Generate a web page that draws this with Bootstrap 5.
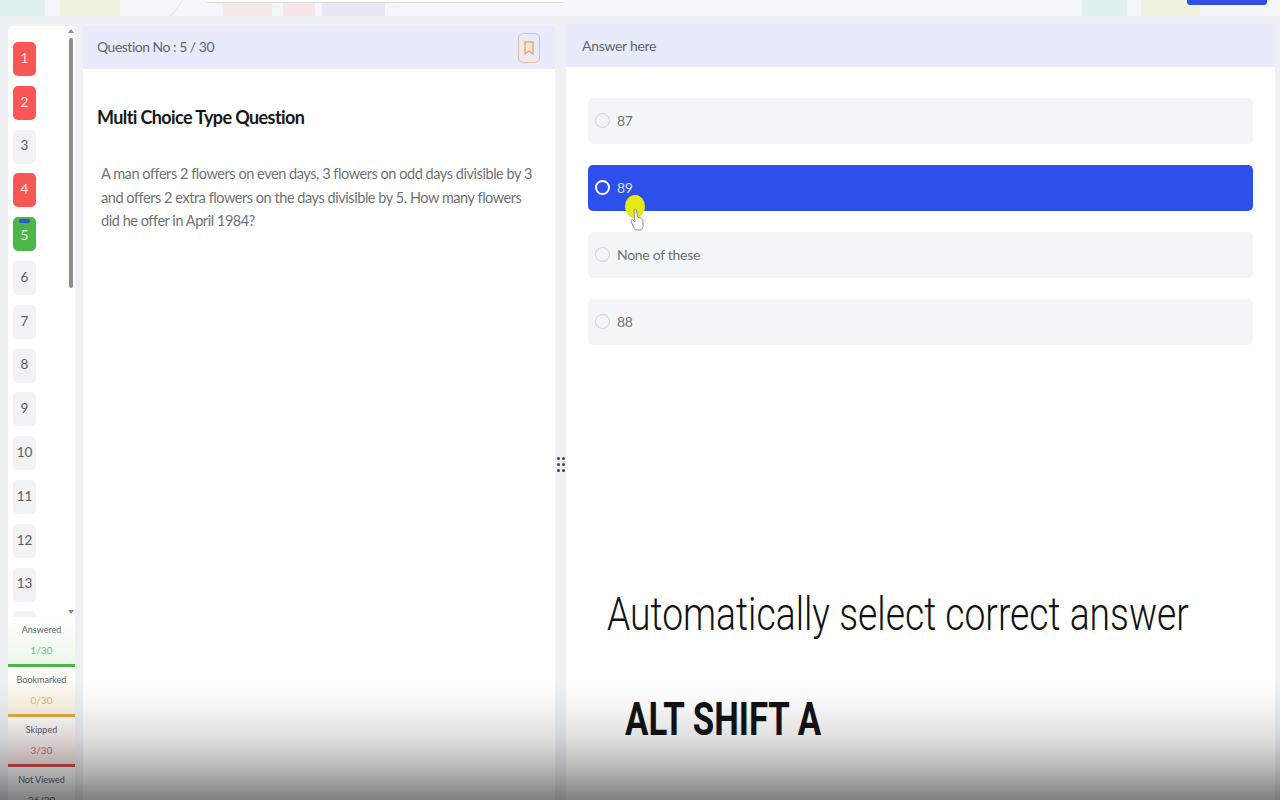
<!DOCTYPE html>
<html lang="en">
<head>
  <meta charset="UTF-8" />
  <meta name="viewport" content="width=device-width, initial-scale=1.0"/>
  <title>Assessment</title>
  <link href="https://cdn.jsdelivr.net/npm/bootstrap@5.3.3/dist/css/bootstrap.min.css" rel="stylesheet">
  <style>
    html, body { height: 800px; overflow: hidden; }
    body { background: #eef1f4; font-family: "Lato", "Liberation Sans", sans-serif; color: #6a6c70; position: relative; }

    /* strip of the page header, mostly cut off */
    .top-strip { height: 16px; background: #f4f6f9; overflow: hidden; }
    .strip-a { width: 45px; background: #e0f2ef; }
    .strip-b { width: 60px; margin-left: 15px; background: #eef2de; }
    .strip-c { width: 49px; margin-left: 103px; background: #f8e9e9; }
    .strip-d { width: 32px; margin-left: 11px; background: #f6e6ea; }
    .strip-e { width: 63px; margin-left: 7px; background: #e9e7f5; }
    .strip-f { width: 45px; margin-left: 697px; background: #e0f2ef; }
    .strip-g { width: 59px; margin-left: 14px; background: #eef2de; }
    .strip-search { position: absolute; left: 205px; top: 0; width: 360px; height: 3px; background: #fff; border-bottom: 1px solid #ddd; border-radius: 0 0 3px 3px; }
    .strip-btn { position: absolute; left: 1187px; top: 0; width: 80px; height: 5px; background: #2f4fe6; border-radius: 0 0 3px 3px; }
    .strip-slant { position: absolute; left: 168px; top: 0; }

    .exam-body { height: 784px; padding: 10px 0 0 8px; }

    .side-col { width: 67px; flex: none; }
    .q-scroll { height: 591px; flex: none; background: #fff; overflow: hidden; padding: 16px 0 0 5px; position: relative; border-radius: 4px 4px 0 0; }
    .q-num { width: 23px; height: 34px; border-radius: 5px; background: #f1f2f4; font-size: 13.5px; color: #5c5e62; margin-bottom: 9.8px; padding-bottom: 2px; position: relative; }
    .q-num.is-red { background: #f95656; color: #fde3e3; }
    .q-num.is-green { background: #4cb648; color: #e4f5e3; padding: 2px 0 0; }
    .q-num.is-green::before { content: ""; position: absolute; top: 2px; left: 6px; width: 11px; height: 4px; border-radius: 2px; background: #2f55d4; }
    .scroll-thumb { position: absolute; top: 12px; right: 2px; width: 4px; height: 250px; background: #8b8d90; border-radius: 2px; }
    .arrow-up, .arrow-down { position: absolute; right: 1px; width: 0; height: 0; border-left: 3px solid transparent; border-right: 3px solid transparent; }
    .arrow-up { top: 3px; border-bottom: 4px solid #8b8d90; }
    .arrow-down { bottom: 3px; border-top: 4px solid #8b8d90; }

    .stat-box { height: 50px; flex: none; text-align: center; font-size: 9px; padding-top: 3px; line-height: 20px; border-bottom: 3px solid; color: #5c5e62; }
    .stat-box span { display: block; font-size: 10px; }
    .stat-answered { background: linear-gradient(#fff, #ecf8ea); border-color: #4cb648; }
    .stat-answered span { color: #6cbd68; }
    .stat-bookmarked { background: linear-gradient(#fff, #fbf3e2); border-color: #e5ac45; }
    .stat-bookmarked span { color: #e8b45a; }
    .stat-skipped { background: linear-gradient(#fff, #f8e6e6); border-color: #d9524f; }
    .stat-skipped span { color: #dd6663; }
    .stat-none { border: 0; background: #fff; }
    .stat-none span { color: #5c5e62; }

    .panel-q { width: 472px; flex: none; margin-left: 8px; background: #fff; }
    .panel-head { background: #e7ebfb; font-size: 14px; letter-spacing: -.3px; color: #63656b; height: 43px; }
    .panel-q .panel-head { padding: 0 15px 0 14px; letter-spacing: -.5px; }
    .panel-q .panel-head span { margin-top: -2px; }
    .mark-btn { width: 22px; height: 30px; border: 1px solid #f0bb9d; border-radius: 5px; }
    .q-title { font-size: 18px; font-weight: 700; letter-spacing: -.6px; color: #17181a; margin: 36px 0 0 14px; line-height: 24px; }
    .q-text { font-size: 14.5px; letter-spacing: -.45px; line-height: 23.7px; margin: 33px 0 0 18px; width: 440px; color: #6f7175; }

    .drag-col { width: 11px; flex: none; padding-top: 102px; }
    .drag-dots { display: grid; grid-template-columns: 3px 3px; gap: 3px 2px; }
    .drag-dots i { width: 3px; height: 3px; background: #444; border-radius: 50%; }

    .panel-a { width: 709px; flex: none; margin-top: -2px; background: #fff; }
    .panel-a .panel-head { padding-left: 16px; }
    .option-list { padding: 31px 22px 0 22px; gap: 21px; }
    .opt-row { height: 46px; border-radius: 5px; background: #f4f5f7; padding: 0 0 2px 7px; font-size: 14px; letter-spacing: -.3px; color: #6f7175; gap: 7px; }
    .opt-row.is-picked { background: #2d4fec; color: #d9e0fb; }
    .opt-radio { width: 15px; height: 15px; border-radius: 50%; border: 1.5px solid #cfd0d2; background: #f4f5f7; }
    .is-picked .opt-radio { border: 2px solid #fff; background: transparent; }

    .cursor-dot { position: absolute; left: 625px; top: 195px; width: 20px; height: 23px; border-radius: 50%; background: #e6ea12; }
    .cursor-hand { position: absolute; left: 630px; top: 208px; }

    .fade-over { position: absolute; left: 0; right: 0; bottom: 0; height: 120px; background: linear-gradient(rgba(0,0,0,0), rgba(0,0,0,.03) 19%, rgba(0,0,0,.12) 48%, rgba(0,0,0,.29) 75%, rgba(0,0,0,.5)); pointer-events: none; }
    .say-1, .say-2 { position: absolute; color: #111; font-family: "Roboto", sans-serif; white-space: nowrap; transform-origin: left center; }
    .say-1 { left: 607px; top: 586px; font-size: 46px; font-weight: 300; line-height: 56px; transform: scaleX(.81); }
    .say-2 { left: 625px; top: 692px; font-size: 46px; line-height: 54px; font-weight: 700; transform: scaleX(.757); }
  </style>
</head>
<body>
  <div class="top-strip d-flex">
    <div class="strip-a"></div>
    <div class="strip-b"></div>
    <div class="strip-c"></div>
    <div class="strip-d"></div>
    <div class="strip-e"></div>
    <div class="strip-f"></div>
    <div class="strip-g"></div>
  </div>
  <svg class="strip-slant" width="16" height="16" viewBox="0 0 16 16" fill="none" stroke="#e3e5e8" stroke-width="1"><path d="M15 0L3 16"/></svg>
  <div class="strip-search"></div>
  <div class="strip-btn"></div>

  <div class="exam-body d-flex">
    <div class="side-col d-flex flex-column">
      <div class="q-scroll">
        <div class="q-num is-red d-flex align-items-center justify-content-center">1</div>
        <div class="q-num is-red d-flex align-items-center justify-content-center">2</div>
        <div class="q-num d-flex align-items-center justify-content-center">3</div>
        <div class="q-num is-red d-flex align-items-center justify-content-center">4</div>
        <div class="q-num is-green d-flex align-items-center justify-content-center">5</div>
        <div class="q-num d-flex align-items-center justify-content-center">6</div>
        <div class="q-num d-flex align-items-center justify-content-center">7</div>
        <div class="q-num d-flex align-items-center justify-content-center">8</div>
        <div class="q-num d-flex align-items-center justify-content-center">9</div>
        <div class="q-num d-flex align-items-center justify-content-center">10</div>
        <div class="q-num d-flex align-items-center justify-content-center">11</div>
        <div class="q-num d-flex align-items-center justify-content-center">12</div>
        <div class="q-num d-flex align-items-center justify-content-center">13</div>
        <div class="q-num d-flex align-items-center justify-content-center"></div>
        <div class="arrow-up"></div>
        <div class="scroll-thumb"></div>
        <div class="arrow-down"></div>
      </div>
      <div class="stat-box stat-answered">Answered<span>1/30</span></div>
      <div class="stat-box stat-bookmarked">Bookmarked<span>0/30</span></div>
      <div class="stat-box stat-skipped">Skipped<span>3/30</span></div>
      <div class="stat-box stat-none">Not Viewed<span>26/30</span></div>
    </div>

    <div class="panel-q">
      <div class="panel-head d-flex align-items-center justify-content-between">
        <span>Question No : 5 / 30</span>
        <div class="mark-btn d-flex align-items-center justify-content-center">
          <svg width="10" height="14" viewBox="0 0 10 14" fill="#fbe6d2" stroke="#eda767" stroke-width="1.4"><path d="M1 1h8v12L5 10l-4 3z"/></svg>
        </div>
      </div>
      <div class="q-title">Multi Choice Type Question</div>
      <div class="q-text">A man offers 2 flowers on even days, 3 flowers on odd days divisible by 3 and offers 2 extra flowers on the days divisible by 5. How many flowers did he offer in April 1984?</div>
    </div>

    <div class="drag-col d-flex align-items-center justify-content-center">
      <div class="drag-dots"><i></i><i></i><i></i><i></i><i></i><i></i></div>
    </div>

    <div class="panel-a">
      <div class="panel-head d-flex align-items-center">Answer here</div>
      <div class="option-list d-flex flex-column">
        <div class="opt-row d-flex align-items-center"><div class="opt-radio"></div>87</div>
        <div class="opt-row is-picked d-flex align-items-center"><div class="opt-radio"></div>89</div>
        <div class="opt-row d-flex align-items-center"><div class="opt-radio"></div>None of these</div>
        <div class="opt-row d-flex align-items-center"><div class="opt-radio"></div>88</div>
      </div>
    </div>
  </div>

  <div class="cursor-dot"></div>
  <svg class="cursor-hand" width="14" height="24" viewBox="0 0 14 24" fill="#fff" stroke="#8a8a8a" stroke-width="1"><path d="M4 2c1-1 2-1 2.500 0l1 7 3 1c2 1 2.500 2 2.500 4v4c0 2-1 4-3 4H7c-1.500 0-2.500-1-3-2L1 13c0-1 1-1.500 2-1l2 2z"/></svg>

  <div class="fade-over"></div>
  <div class="say-1">Automatically select correct answer</div>
  <div class="say-2">ALT SHIFT A</div>

  <script src="https://cdn.jsdelivr.net/npm/bootstrap@5.3.3/dist/js/bootstrap.bundle.min.js"></script>
</body>
</html>
